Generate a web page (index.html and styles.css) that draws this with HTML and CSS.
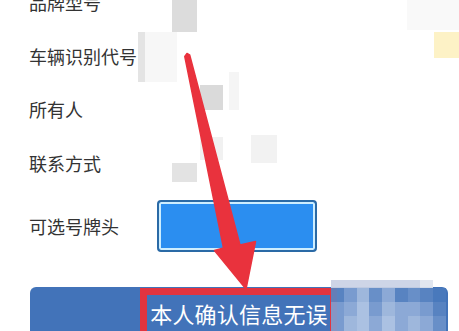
FILE: index.html
```html
<!DOCTYPE html>
<html lang="zh-CN">
<head>
<meta charset="utf-8">
<title>确认信息</title>
<link rel="stylesheet" href="styles.css">
</head>
<body>
<div class="page">
  <div class="form">
    <div class="row"><span class="label">品牌型号</span></div>
    <div class="row"><span class="label">车辆识别代号</span></div>
    <div class="row"><span class="label">所有人</span></div>
    <div class="row"><span class="label">联系方式</span></div>
    <div class="row row-btn"><span class="label">可选号牌头</span><button class="plate-btn" type="button"></button></div>
  </div>
  <div class="bar"><span class="bar-text">本人确认信息无误</span></div>

  <div class="blur p1"></div>
  <div class="blur p2"></div>
  <div class="blur p2b"></div>
  <div class="blur p3"></div>
  <div class="blur p4"></div>
  <div class="blur p5"></div>
  <div class="blur p6"></div>
  <div class="blur p7"></div>
  <div class="blur p8"></div>
  <div class="blur p9"></div>

  <div class="red-box"></div>

  <div class="mosaic">
    <i class="m0"></i><i class="m0"></i><i class="m0"></i><i class="m0"></i><i class="m0"></i><i class="m0"></i><i class="m0"></i><i class="m0b"></i><i class="mw"></i>
    <i class="m1"></i><i class="m3"></i><i class="m5"></i><i class="m2"></i><i class="m4"></i><i class="m1"></i><i class="m2"></i><i class="m1"></i><i class="m9"></i>
    <i class="m3"></i><i class="m4"></i><i class="m6"></i><i class="m3"></i><i class="m5"></i><i class="m4"></i><i class="m4"></i><i class="m3"></i><i class="m1"></i>
    <i class="m3"></i><i class="m5"></i><i class="m6"></i><i class="m4"></i><i class="m6"></i><i class="m4"></i><i class="m5"></i><i class="m4"></i><i class="m2"></i>
  </div>

  <svg class="arrow" width="459" height="331" viewBox="0 0 459 331" aria-hidden="true">
    <polygon points="184.8,56.5 223.5,248 214.5,250.5 246,289 255.5,241.5 240,245 189.6,54.8 187,53.5" fill="#e9323d" stroke="#e9323d" stroke-width="1.5" stroke-linejoin="round"/>
  </svg>
</div>
</body>
</html>
```

FILE: styles.css
```css
html, body {
  margin: 0;
  padding: 0;
  background: #ffffff;
}

.page {
  position: relative;
  width: 459px;
  height: 331px;
  overflow: hidden;
  background: #ffffff;
  font-family: "Noto Sans CJK SC", "Noto Sans", sans-serif;
}

.form {
  margin-top: -24.75px;
}

.row {
  height: 53.5px;
  display: flex;
  align-items: center;
  padding-left: 29px;
}

.label {
  width: 128px;
  flex: none;
  font-size: 18px;
  color: #333333;
  line-height: 1;
  white-space: nowrap;
}

.row-btn {
  height: auto;
  padding-top: 10.75px;
}

.plate-btn {
  width: 160px;
  height: 52px;
  margin: 0;
  padding: 0;
  box-sizing: border-box;
  border: 2px solid #2a6aa6;
  border-radius: 4px;
  background: #2b8ef0;
  box-shadow: inset 0 0 0 2px #cdeeff;
}

.bar {
  margin: 35px 11px 0 30px;
  height: 52px;
  border-radius: 6px 6px 0 0;
  background: #4273b9;
  display: flex;
  align-items: center;
  justify-content: center;
}

.bar-text {
  font-size: 22px;
  color: #ffffff;
  line-height: 1;
  letter-spacing: 0.2px;
}

.blur {
  position: absolute;
}
.p1 { left: 172px; top: 0; width: 25px; height: 32px; background: #dcdcdc; }
.p2 { left: 138px; top: 32px; width: 7px; height: 50px; background: #e4e4e4; }
.p2b { left: 145px; top: 32px; width: 32px; height: 50px; background: #f7f7f7; }
.p3 { left: 200px; top: 85px; width: 23px; height: 25px; background: #dadada; }
.p4 { left: 172px; top: 163px; width: 25px; height: 19px; background: #e3e3e3; }
.p5 { left: 200px; top: 137px; width: 23px; height: 23px; background: #f1f1f1; }
.p6 { left: 407px; top: 0; width: 52px; height: 30px; background: #f9f9f9; }
.p7 { left: 434px; top: 32px; width: 25px; height: 26px; background: #fdf2c6; }
.p8 { left: 251px; top: 135px; width: 26px; height: 28px; background: #f2f2f2; }
.p9 { left: 229px; top: 72px; width: 10px; height: 38px; background: #f5f5f5; }

.red-box {
  position: absolute;
  left: 140px;
  top: 288px;
  width: 197px;
  height: 60px;
  box-sizing: border-box;
  border: 7px solid #e2343f;
}

.mosaic {
  position: absolute;
  left: 331px;
  top: 280px;
  width: 115px;
  height: 51px;
  display: grid;
  grid-template-columns: repeat(9, 1fr);
  grid-template-rows: 8px 14px 14px 15px;
  opacity: 0.92;
}
.mosaic i { display: block; }
.mw { background: transparent; }
.m0 { background: #cad2e5; }
.m0b { background: #dfe4ee; }
.m1 { background: #5a85c2; }
.m2 { background: #6c92ca; }
.m3 { background: #7e9fd1; }
.m4 { background: #93aed9; }
.m5 { background: #a6bde0; }
.m6 { background: #b4c8e6; }
.m9 { background: #4a7abd; }

.arrow {
  position: absolute;
  left: 0;
  top: 0;
  pointer-events: none;
}
```
